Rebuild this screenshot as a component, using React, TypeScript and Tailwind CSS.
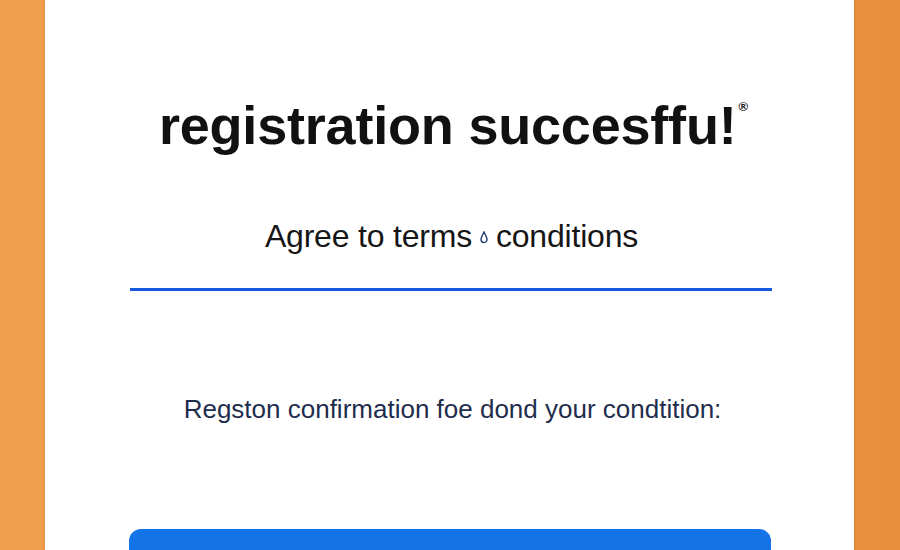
import React from "react";

export default function App() {
  return (
    <div className="w-[900px] h-[550px] overflow-hidden bg-gradient-to-r from-[#F09F4C] via-[#EC9847] to-[#E6903E] flex">
      <div className="ml-[45px] w-[809px] h-full bg-white flex flex-col shadow-[0_0_3px_rgba(0,0,0,0.15)]" style={{ fontFamily: '"Liberation Sans", Arial, sans-serif' }}>
        <div className="pt-[98px] flex justify-center shrink-0">
          <h1 className="text-[54px] leading-none font-bold text-[#111111] tracking-[-0.2px] pl-[8px]">
            registration succesffu!
            <span className="inline-block align-top ml-[2px] mt-[2px] text-[13px] leading-none font-bold tracking-normal">®</span>
          </h1>
        </div>
        <div className="mt-[68px] flex justify-center shrink-0">
          <p className="text-[32px] leading-none text-[#161616] tracking-[-0.2px] flex items-baseline pl-[4px]">
            <span>Agree to terms</span>
            <svg width="8" height="13" viewBox="0 0 8 13" className="mx-[8px] self-center mt-[2px]">
              <path d="M4 1 C 2.5 4, 1 6.5, 1 8.5 A 3 3 0 0 0 7 8.5 C 7 6.5, 5.5 4, 4 1 Z" fill="none" stroke="#1e3a6e" strokeWidth="1.4" />
            </svg>
            <span>conditions</span>
          </p>
        </div>
        <div className="mt-[36px] ml-[85px] w-[642px] h-[3px] shrink-0 bg-[#1759df]" />
        <div className="mt-[105px] flex justify-center shrink-0">
          <p className="text-[26px] leading-none text-[#1f2d4d] tracking-[0px] pl-[6px]">
            Regston confirmation foe dond your condtition:
          </p>
        </div>
        <div className="mt-[107px] ml-[84px] w-[642px] h-[60px] shrink-0 rounded-[12px] bg-[#1473E6]" />
      </div>
    </div>
  );
}
